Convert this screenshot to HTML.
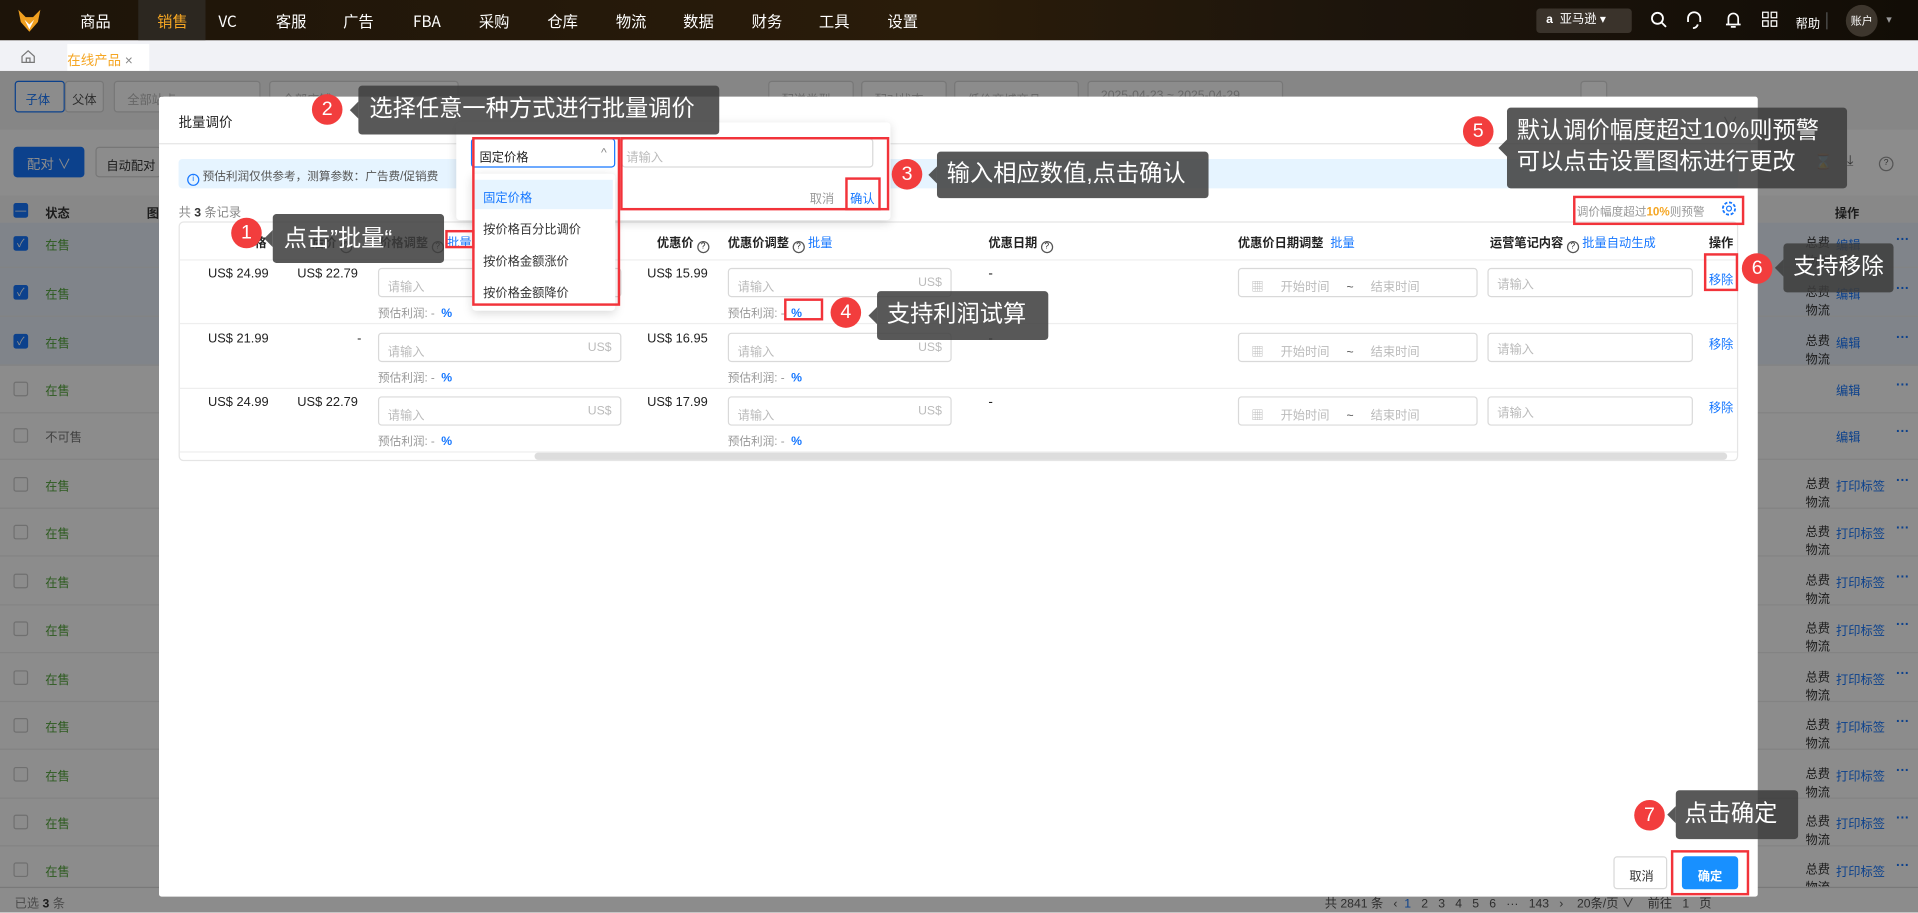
<!DOCTYPE html>
<html><head><meta charset="utf-8"><style>
*{box-sizing:border-box;margin:0;padding:0}
html,body{width:1918px;height:912px;overflow:hidden;background:#fff}
body{font-family:"Liberation Sans","Noto Sans CJK SC",sans-serif;font-size:11px;color:#333}
#w{position:absolute;left:0;top:0;width:1568px;height:746px;transform:scale(1.22321);transform-origin:0 0;overflow:hidden}
.a{position:absolute}
.nav{left:0;top:0;width:1568px;height:33px;background:linear-gradient(90deg,#1d1409,#2a1c0a 50%,#1d150c 70%,#120d06)}
.nav .it{position:absolute;top:0;line-height:33px;height:33px;color:#fff;font-size:12.5px;transform:translateX(-50%);font-family:"Noto Sans CJK SC",sans-serif}
.inp{position:absolute;border:1px solid #d9d9d9;border-radius:3px;background:#fff;color:#bbb;font-size:10px;white-space:nowrap}
.tip{position:absolute;background:rgba(60,60,60,.86);color:#fff;font-size:19px;border-radius:3px;line-height:1;white-space:nowrap}
.tip:before{content:"";position:absolute;left:-7px;top:50%;margin-top:-7px;border:7px solid transparent;border-left:0;border-right-color:rgba(60,60,60,.86)}
.num{position:absolute;width:25px;height:25px;border-radius:50%;background:#f23d3d;color:#fff;font-size:16px;text-align:center;line-height:25px}
.rb{position:absolute;border:2px solid #f2333a}
.blue{color:#1677ff}
.cb{position:absolute;width:12px;height:12px;border:1px solid #ccc;border-radius:2px;background:#fff;color:#fff;font-size:9px;line-height:10px;text-align:center}
.cbo{background:#1677ff;border-color:#1677ff}
.g{color:#52a63a}
.th{position:absolute;font-weight:bold;font-size:10px;color:#222;top:190px;white-space:nowrap}
.q{display:inline-block;width:10px;height:10px;border:1px solid #555;border-radius:50%;font-size:7px;line-height:8px;text-align:center;font-weight:normal;vertical-align:-1px}
.pc{color:#1677ff;font-weight:bold;font-size:10px}
</style></head><body><div id="w">

<div class="a nav">
 <svg class="a" style="left:14px;top:7px" width="20" height="20" viewBox="0 0 20 20"><path d="M1 1 L7 7 L13 7 L19 1 L17 11 L10 19 L3 11Z" fill="#f0a020"/><path d="M6 9 L10 13 L14 9 L10 17Z" fill="#fff"/></svg>
 <div class="a" style="left:113px;top:0;width:55px;height:33px;background:#2c2720"></div>
 <span class="it" style="left:78px">商品</span><span class="it" style="left:141px;color:#f5a623">销售</span><span class="it" style="left:186px">VC</span><span class="it" style="left:238px">客服</span><span class="it" style="left:293px">广告</span><span class="it" style="left:349px">FBA</span><span class="it" style="left:404px">采购</span><span class="it" style="left:460px">仓库</span><span class="it" style="left:516px">物流</span><span class="it" style="left:571px">数据</span><span class="it" style="left:627px">财务</span><span class="it" style="left:682px">工具</span><span class="it" style="left:738px">设置</span>
 <div class="a" style="left:1256px;top:7px;width:78px;height:20px;background:#3a332b;border-radius:3px;color:#fff;font-size:10px;line-height:20px;padding-left:8px"><b>a</b>&nbsp; 亚马逊 ▾</div>
 <svg class="a" style="left:1349px;top:9px" width="14" height="14"><circle cx="6" cy="6" r="4.5" stroke="#fff" stroke-width="1.5" fill="none"/><path d="M9.5 9.5 L13 13" stroke="#fff" stroke-width="1.5"/></svg>
 <svg class="a" style="left:1378px;top:9px" width="14" height="15"><path d="M2 9 V6 a5 5 0 0 1 10 0 V9 M10 11 Q9 14 6 14" stroke="#fff" stroke-width="1.5" fill="none"/></svg>
 <svg class="a" style="left:1410px;top:9px" width="14" height="15"><path d="M3 11 V6 a4 4 0 0 1 8 0 V11 Z M1 11 H13 M5 13 H9" stroke="#fff" stroke-width="1.4" fill="none"/></svg>
 <svg class="a" style="left:1440px;top:9px" width="14" height="14"><rect x="1" y="1" width="4.5" height="4.5" stroke="#fff" fill="none"/><rect x="8" y="1" width="4.5" height="4.5" stroke="#fff" fill="none"/><rect x="1" y="8" width="4.5" height="4.5" stroke="#fff" fill="none"/><rect x="8" y="8" width="4.5" height="4.5" stroke="#fff" fill="none"/></svg>
 <span class="a" style="left:1468px;top:11px;color:#fff;font-size:10px">帮助</span>
 <div class="a" style="left:1493px;top:10px;width:1px;height:14px;background:#555"></div>
 <div class="a" style="left:1509px;top:4px;width:26px;height:26px;border-radius:50%;background:#3d362d;color:#fff;font-size:9px;line-height:26px;text-align:center">账户</div>
 <span class="a" style="left:1542px;top:11px;color:#999;font-size:9px">▾</span>
</div>
<div class="a" style="left:0;top:33px;width:1568px;height:25px;background:#f1f2f6"></div>
<svg class="a" style="left:17px;top:40px" width="12" height="12"><path d="M1 6 L6 1.5 L11 6 V11 H1Z M4.5 11 V7.5 H7.5 V11" stroke="#777" fill="none"/></svg>
<div class="a" style="left:55px;top:36px;width:67px;height:22px;background:#fff;color:#f5a623;font-size:11px;padding:5px 0 0 0">在线产品 <span style="color:#888">×</span></div>

<div class="a" style="left:0;top:58px;width:1568px;height:688px;background:#fff"></div>
<div class="a" style="left:0;top:58px;width:1568px;height:48px;background:#f4f4f4"></div>
<div class="a inp" style="left:12px;top:66px;width:41px;height:26px;border-color:#1677ff;color:#1677ff;padding:6px 0 0 8px">子体</div>
<div class="a inp" style="left:53px;top:66px;width:32px;height:26px;color:#555;padding:6px 0 0 5px">父体</div>
<div class="a inp" style="left:93px;top:66px;width:120px;height:26px;padding:6px 10px">全部站点</div>
<div class="a inp" style="left:220px;top:66px;width:155px;height:26px;padding:6px 10px">全部店铺</div>
<div class="a inp" style="left:628px;top:66px;width:70px;height:26px;padding:6px 10px">配送类型</div>
<div class="a inp" style="left:704px;top:66px;width:70px;height:26px;padding:6px 10px">配对状态</div>
<div class="a inp" style="left:780px;top:66px;width:102px;height:26px;padding:6px 10px">低价商城商品</div>
<div class="a inp" style="left:889px;top:66px;width:160px;height:26px;padding:6px 10px">2025-04-23 ~ 2025-04-29</div>
<div class="a inp" style="left:1292px;top:66px;width:22px;height:26px"></div>
<div class="a" style="left:11px;top:120px;width:58px;height:25px;background:#1677ff;border-radius:3px;color:#fff;padding:6px 0 0 11px">配对 ∨</div>
<div class="a inp" style="left:78px;top:120px;width:54px;height:25px;color:#333;padding:6px 0 0 8px">自动配对</div>
<div class="a" style="left:0;top:160px;width:1568px;height:22px;background:#f7f7f7"></div>
<div class="cb cbo" style="left:11px;top:166px">—</div>
<b class="a" style="left:37px;top:166px;font-size:10px">状态</b><b class="a" style="left:120px;top:166px;font-size:10px">图</b>
<b class="a" style="left:1500px;top:166px;font-size:10px">操作</b>
<div class="a" style="left:0;top:182px;width:1568px;height:117px;background:#e9f1fb"></div>

<div id="rows"></div>
<script>
var h='';var ys=[199,239,279,318,356,396,435,475,514,554,593,633,672,711];
ys.forEach(function(y,i){
 h+='<div class="cb '+(i<3?'cbo':'')+'" style="left:11px;top:'+(y-6)+'px">'+(i<3?'✓':'')+'</div>';
 h+='<span class="a '+(i==4?'':'g')+'" style="left:37px;top:'+(y-7)+'px;font-size:10px;color:'+(i==4?'#777':'')+'">'+(i==4?'不可售':'在售')+'</span>';
 h+='<div class="a" style="left:0;top:'+(y+19)+'px;width:1568px;height:1px;background:#eee"></div>';
 if(i!=3&&i!=4){h+='<span class="a" style="left:1476px;top:'+(y-7)+'px;font-size:10px;line-height:15px">总费<br>物流</span>';}
 h+='<span class="a blue" style="left:1501px;top:'+(y-7)+'px;font-size:10px">'+(i>=5?'打印标签':'编辑')+'</span><span class="a blue" style="left:1550px;top:'+(y-9)+'px;font-weight:bold">···</span>';
});
document.getElementById('rows').innerHTML=h;
</script>
<div class="a" style="left:0;top:725px;width:1568px;height:21px;background:#fff;border-top:1px solid #ddd"></div>
<span class="a" style="left:12px;top:730px;color:#888;font-size:10px">已选 <b style="color:#333">3</b> 条</span>
<span class="a" style="left:1083px;top:730px;font-size:10px;color:#555">共 2841 条 &nbsp; ‹ &nbsp;<span class="blue">1</span> &nbsp; 2 &nbsp; 3 &nbsp; 4 &nbsp; 5 &nbsp; 6 &nbsp; ··· &nbsp; 143 &nbsp; › &nbsp;&nbsp; 20条/页 ∨ &nbsp;&nbsp; 前往 &nbsp; 1 &nbsp; 页</span>

<div class="a" style="left:0;top:58px;width:1568px;height:688px;background:rgba(0,0,0,.45)"></div>

<div class="a" style="left:130px;top:79px;width:1307px;height:654px;background:#fff;border-radius:2px"></div>
<b class="a" style="left:146px;top:92px;font-size:11px;font-weight:normal;color:#222">批量调价</b>
<span class="a" style="left:1408px;top:90px;color:#777;font-size:13px">∨</span>
<div class="a" style="left:130px;top:117px;width:1307px;height:1px;background:#e5e5e5"></div>
<div class="a" style="left:146px;top:130px;width:1275px;height:24px;background:#e6f4ff;border-radius:3px"></div>
<span class="a" style="left:153px;top:136px;font-size:9.5px;color:#555"><span class="q" style="border-color:#1677ff;color:#1677ff">i</span> 预估利润仅供参考，测算参数：广告费/促销费</span>
<span class="a" style="left:1483px;top:125px;font-size:12px;color:#333">⌛</span>
<span class="a" style="left:1510px;top:124px;font-size:12px;color:#333">⤓</span>
<span class="a q" style="left:1536px;top:128px;width:12px;height:12px;line-height:10px">?</span>
<span class="a" style="left:146px;top:165px;font-size:10px;color:#888">共 <b style="color:#333">3</b> 条记录</span>
<span class="a" style="left:1289px;top:165px;font-size:9.5px;color:#999">调价幅度超过<b style="color:#f5a623">10%</b>则预警</span>
<svg class="a" style="left:1407px;top:164px" width="13" height="13"><circle cx="6.5" cy="6.5" r="5" stroke="#1677ff" stroke-width="1.5" fill="none" stroke-dasharray="2.5 1.4"/><circle cx="6.5" cy="6.5" r="2" stroke="#1677ff" fill="none"/></svg>

<div class="a" style="left:146px;top:181px;width:1275px;height:196px;border:1px solid #e5e5e5;border-radius:4px"></div>
<div class="a" style="left:147px;top:212px;width:1273px;height:1px;background:#eee"></div>
<div class="a" style="left:147px;top:264px;width:1273px;height:1px;background:#eee"></div>
<div class="a" style="left:147px;top:317px;width:1273px;height:1px;background:#eee"></div>
<div class="a" style="left:147px;top:369px;width:1273px;height:1px;background:#eee"></div>
<div class="a" style="left:437px;top:370px;width:975px;height:6px;background:#ddd;border-radius:3px"></div>
<span class="th" style="left:208px">格</span>
<span class="th" style="left:255px">后价 <span class="q">?</span></span>
<span class="th" style="left:310px">价格调整 <span class="q">?</span> <span class="blue" style="font-weight:normal">批量</span></span>
<span class="th" style="left:537px">优惠价 <span class="q">?</span></span>
<span class="th" style="left:595px">优惠价调整 <span class="q">?</span> <span class="blue" style="font-weight:normal">批量</span></span>
<span class="th" style="left:808px">优惠日期 <span class="q">?</span></span>
<span class="th" style="left:1012px">优惠价日期调整 &nbsp;<span class="blue" style="font-weight:normal">批量</span></span>
<span class="th" style="left:1218px">运营笔记内容 <span class="q">?</span> <span class="blue" style="font-weight:normal">批量自动生成</span></span>
<span class="th" style="left:1397px">操作</span>
<div id="mrows"></div>
<script>
var d=[["24.99","US$ 22.79","15.99"],["21.99","-","16.95"],["24.99","US$ 22.79","17.99"]];var m='';
d.forEach(function(r,i){var y=218+i*52.5;
 m+='<span class="a" style="left:170px;top:'+(y)+'px;font-size:10.5px;color:#222">US$ '+r[0]+'</span>';
 m+='<span class="a" style="left:'+(r[1]=='-'?292:243)+'px;top:'+y+'px;font-size:10.5px;color:#222">'+r[1]+'</span>';
 m+='<div class="inp" style="left:309px;top:'+(y+1)+'px;width:199px;height:24px;padding:6px 7px">请输入<span style="float:right">US$</span></div>';
 m+='<span class="a" style="left:309px;top:'+(y+30)+'px;font-size:9.5px;color:#999">预估利润: - &nbsp;<span class="pc">%</span></span>';
 m+='<span class="a" style="left:529px;top:'+y+'px;font-size:10.5px;color:#222">US$ '+r[2]+'</span>';
 m+='<div class="inp" style="left:595px;top:'+(y+1)+'px;width:183px;height:24px;padding:6px 7px">请输入<span style="float:right">US$</span></div>';
 m+='<span class="a" style="left:595px;top:'+(y+30)+'px;font-size:9.5px;color:#999">预估利润: - &nbsp;<span class="pc">%</span></span>';
 m+='<span class="a" style="left:808px;top:'+y+'px;color:#222">-</span>';
 m+='<div class="inp" style="left:1012px;top:'+(y+1)+'px;width:196px;height:24px;padding:6px 10px">▦ &nbsp;&nbsp;&nbsp; 开始时间 &nbsp;&nbsp;&nbsp; <span style="color:#555">~</span> &nbsp;&nbsp;&nbsp; 结束时间</div>';
 m+='<div class="inp" style="left:1216px;top:'+(y+1)+'px;width:168px;height:24px;padding:4px 7px">请输入</div>';
 m+='<span class="a blue" style="left:1397px;top:'+(y+2)+'px;font-size:10px">移除</span>';
});
document.getElementById('mrows').innerHTML=m;
</script>

<div class="a" style="left:373px;top:100px;width:355px;height:80px;background:#fff;box-shadow:0 2px 8px rgba(0,0,0,.15);border-radius:3px"></div>
<div class="inp" style="left:385px;top:113px;width:118px;height:24px;border-color:#1677ff;color:#222;padding:6px 6px">固定价格<span style="float:right;color:#888">^</span></div>
<div class="inp" style="left:508px;top:113px;width:206px;height:24px;padding:6px 3px">请输入</div>
<span class="a" style="left:662px;top:154px;color:#999;font-size:10px">取消</span>
<span class="a blue" style="left:695px;top:154px;font-size:10px">确认</span>
<div class="a" style="left:386px;top:142px;width:117px;height:112px;background:#fff;box-shadow:0 2px 8px rgba(0,0,0,.15);border-radius:3px"></div>
<div class="a" style="left:388px;top:147px;width:113px;height:24px;background:#e6f4ff"></div>
<span class="a blue" style="left:395px;top:153px;font-size:10px">固定价格</span>
<span class="a" style="left:395px;top:179px;font-size:10px;color:#333">按价格百分比调价</span>
<span class="a" style="left:395px;top:205px;font-size:10px;color:#333">按价格金额涨价</span>
<span class="a" style="left:395px;top:231px;font-size:10px;color:#333">按价格金额降价</span>

<div class="inp" style="left:1319px;top:700px;width:44px;height:27px;color:#333;padding:7px 0 0 12px">取消</div>
<div class="a" style="left:1375px;top:700px;width:46px;height:27px;background:#1890ff;border-radius:3px;color:#fff;font-size:10px;font-weight:bold;padding:8px 0 0 13px">确定</div>

<div class="rb" style="left:386px;top:112px;width:121px;height:138px"></div>
<div class="rb" style="left:507px;top:112px;width:220px;height:60px"></div>
<div class="rb" style="left:691px;top:145px;width:29px;height:27px"></div>
<div class="rb" style="left:364px;top:188px;width:24px;height:15px"></div>
<div class="rb" style="left:641px;top:244px;width:32px;height:18px"></div>
<div class="rb" style="left:1286px;top:160px;width:140px;height:24px"></div>
<div class="rb" style="left:1393px;top:207px;width:28px;height:31px"></div>
<div class="rb" style="left:1366px;top:695px;width:64px;height:37px"></div>

<div class="num" style="left:255px;top:77px">2</div><div class="tip" style="left:293px;top:70px;width:295px;height:40px;padding:10px 9px">选择任意一种方式进行批量调价</div>
<div class="num" style="left:189px;top:178px">1</div><div class="tip" style="left:223px;top:175px;width:140px;height:40px;padding:11px 9px">点击”批量“</div>
<div class="num" style="left:729px;top:130px">3</div><div class="tip" style="left:766px;top:124px;width:222px;height:38px;padding:9px 8px">输入相应数值,点击确认</div>
<div class="num" style="left:679px;top:243px">4</div><div class="tip" style="left:717px;top:238px;width:140px;height:40px;padding:10px 8px">支持利润试算</div>
<div class="num" style="left:1196px;top:95px">5</div><div class="tip" style="left:1232px;top:88px;width:278px;height:66px;padding:8px 8px;line-height:1.3">默认调价幅度超过10%则预警<br>可以点击设置图标进行更改</div>
<div class="num" style="left:1424px;top:207px">6</div><div class="tip" style="left:1458px;top:199px;width:90px;height:40px;padding:10px 8px;font-size:18.5px">支持移除</div>
<div class="num" style="left:1336px;top:654px">7</div><div class="tip" style="left:1370px;top:646px;width:100px;height:40px;padding:10px 7px">点击确定</div>

</div></body></html>
